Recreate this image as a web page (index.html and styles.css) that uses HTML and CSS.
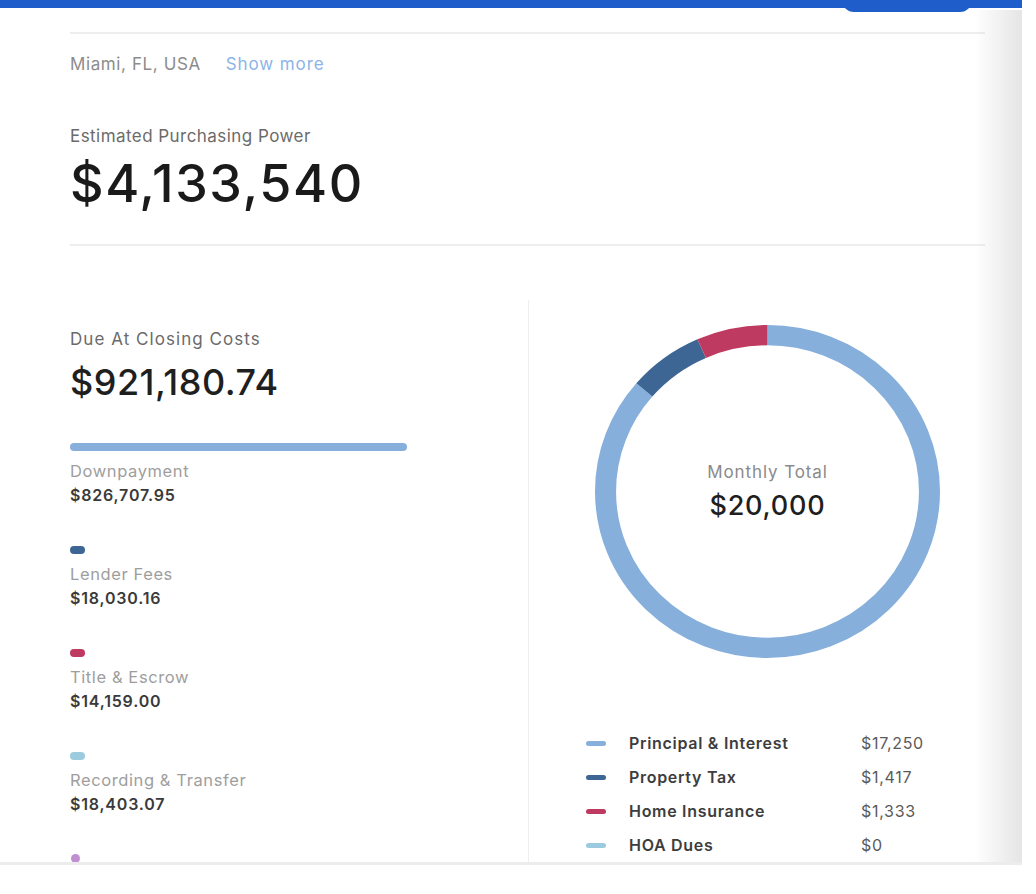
FILE: index.html
```html
<!DOCTYPE html>
<html lang="en">
<head>
<meta charset="utf-8">
<title>Purchasing Power</title>
<link rel="stylesheet" href="styles.css">
</head>
<body>
<div class="screen">
  <div class="topbar"><div class="tab"></div></div>
  <main class="content">
    <hr class="rule">
    <div class="location">
      <span class="city">Miami, FL, USA</span>
      <a class="more">Show more</a>
    </div>
    <section class="power">
      <div class="label label-power">Estimated Purchasing Power</div>
      <div class="power-value">$4,133,540</div>
    </section>
    <hr class="rule rule-lower">
    <div class="columns">
      <section class="closing">
        <div class="label label-closing">Due At Closing Costs</div>
        <div class="closing-value">$921,180.74</div>
        <ul class="costs">
          <li class="cost">
            <span class="marker marker-down" style="width:337px"></span>
            <span class="cost-label">Downpayment</span>
            <span class="cost-value">$826,707.95</span>
          </li>
          <li class="cost">
            <span class="marker marker-lender"></span>
            <span class="cost-label">Lender Fees</span>
            <span class="cost-value">$18,030.16</span>
          </li>
          <li class="cost">
            <span class="marker marker-title"></span>
            <span class="cost-label">Title &amp; Escrow</span>
            <span class="cost-value">$14,159.00</span>
          </li>
          <li class="cost">
            <span class="marker marker-record"></span>
            <span class="cost-label">Recording &amp; Transfer</span>
            <span class="cost-value">$18,403.07</span>
          </li>
          <li class="cost">
            <span class="marker marker-other"></span>
          </li>
        </ul>
      </section>
      <section class="monthly">
        <div class="donut">
          <svg class="ring" viewBox="0 0 344 344" preserveAspectRatio="none" aria-hidden="true">
            <g transform="rotate(-90 172 172)">
              <circle cx="172" cy="172" r="161.5" pathLength="100" fill="none" stroke="#86afdb" stroke-width="21" stroke-dasharray="86.25 100" stroke-dashoffset="0"/>
              <circle cx="172" cy="172" r="161.5" pathLength="100" fill="none" stroke="#3e6694" stroke-width="21" stroke-dasharray="7.085 100" stroke-dashoffset="-86.25"/>
              <circle cx="172" cy="172" r="161.5" pathLength="100" fill="none" stroke="#bf3a60" stroke-width="21" stroke-dasharray="6.665 100" stroke-dashoffset="-93.335"/>
            </g>
          </svg>
          <div class="donut-center">
            <div class="donut-label">Monthly Total</div>
            <div class="donut-value">$20,000</div>
          </div>
        </div>
        <ul class="legend">
          <li class="legend-row"><span class="dash dash-pi"></span><span class="legend-label">Principal &amp; Interest</span><span class="legend-value">$17,250</span></li>
          <li class="legend-row"><span class="dash dash-tax"></span><span class="legend-label">Property Tax</span><span class="legend-value">$1,417</span></li>
          <li class="legend-row"><span class="dash dash-ins"></span><span class="legend-label">Home Insurance</span><span class="legend-value">$1,333</span></li>
          <li class="legend-row"><span class="dash dash-hoa"></span><span class="legend-label">HOA Dues</span><span class="legend-value">$0</span></li>
        </ul>
      </section>
    </div>
  </main>
  <div class="shade"></div>
</div>
</body>
</html>
```

FILE: styles.css
```css
* { box-sizing: border-box; }

html, body {
  margin: 0;
  padding: 0;
  background: #ffffff;
}

body {
  font-family: Inter, "Liberation Sans", sans-serif;
  color: #222;
  width: 1036px;
  height: 894px;
  overflow: hidden;
}

.screen {
  position: relative;
  width: 1022px;
  height: 865px;
  border-bottom: 3px solid #ececec;
  overflow: hidden;
  background: #fff;
}

.topbar {
  height: 8px;
  background: #1f5dcb;
  display: flex;
  justify-content: flex-end;
  align-items: flex-start;
  padding-right: 50px;
  position: relative;
  z-index: 2;
}

.tab {
  width: 130px;
  height: 12px;
  background: #1f5dcb;
  border-radius: 0 0 14px 14px;
}

.content {
  padding: 24px 37px 0 70px;
}

.rule {
  margin: 0;
  border: 0;
  height: 2px;
  background: #eeeeee;
}

.location {
  margin-top: 20px;
  height: 20px;
  display: flex;
  align-items: center;
  gap: 25px;
  font-size: 17px;
  line-height: 20px;
}

.city {
  color: #8c8c8c;
  letter-spacing: 0.6px;
}

.more {
  color: #8db4e6;
  letter-spacing: 0.9px;
}

.power {
  margin-top: 52px;
}

.label {
  font-size: 17px;
  line-height: 20px;
  color: #6b6b6b;
}

.label-power { letter-spacing: 0.45px; }
.label-closing { letter-spacing: 1.05px; }

.power-value {
  margin-top: 10px;
  font-size: 52px;
  line-height: 56px;
  font-weight: 500;
  color: #1a1a1a;
  letter-spacing: 1.6px;
}

.rule-lower {
  margin-top: 32px;
}

.columns {
  margin-top: 54px;
  display: grid;
  grid-template-columns: 458px 1fr;
  height: 600px;
}

.closing {
  padding-top: 29px;
}

.closing-value {
  margin-top: 11px;
  font-size: 36px;
  line-height: 44px;
  font-weight: 500;
  color: #1f1f1f;
  letter-spacing: 0.5px;
}

.costs {
  list-style: none;
  margin: 39px 0 0;
  padding: 0;
  display: flex;
  flex-direction: column;
  gap: 41px;
}

.cost {
  display: flex;
  flex-direction: column;
  align-items: flex-start;
}

.marker {
  display: block;
  width: 15px;
  height: 8px;
  border-radius: 4px;
}

.marker-down { background: #86afdb; }
.marker-lender { background: #3e6694; }
.marker-title { background: #bf3a60; }
.marker-record { background: #9ccbe0; }
.marker-other {
  background: #c08fd2;
  width: 9px;
  height: 9px;
  border-radius: 50%;
  margin-left: 1px;
  margin-top: -1px;
}

.cost-label {
  margin-top: 10px;
  font-size: 16.5px;
  line-height: 20px;
  color: #9e9e9e;
  letter-spacing: 0.6px;
}

.cost-value {
  margin-top: 4px;
  font-size: 16px;
  line-height: 20px;
  font-weight: 600;
  color: #3a3a3a;
  letter-spacing: 0.8px;
}

.monthly {
  border-left: 1px solid #efefef;
  padding-top: 25px;
}

.donut {
  margin-left: 66px;
  width: 345px;
  height: 333px;
  display: grid;
}

.ring {
  grid-area: 1 / 1;
  width: 345px;
  height: 333px;
}

.donut-center {
  grid-area: 1 / 1;
  align-self: center;
  justify-self: center;
  text-align: center;
}

.donut-label {
  font-size: 17px;
  line-height: 24px;
  color: #8a8a8a;
  letter-spacing: 0.9px;
}

.donut-value {
  margin-top: 4px;
  font-size: 27px;
  line-height: 36px;
  font-weight: 500;
  color: #1f1f1f;
  letter-spacing: 0.8px;
}

.legend {
  list-style: none;
  margin: 68px 0 0 57px;
  padding: 0;
}

.legend-row {
  display: grid;
  grid-template-columns: 20px 209px auto;
  column-gap: 23px;
  align-items: center;
  height: 34px;
}

.dash {
  display: block;
  width: 20px;
  height: 5px;
  border-radius: 3px;
}

.dash-pi { background: #86afdb; }
.dash-tax { background: #3e6694; }
.dash-ins { background: #bf3a60; }
.dash-hoa { background: #9ccbe0; }

.legend-label {
  font-size: 16px;
  font-weight: 600;
  color: #3d3d3d;
  letter-spacing: 0.7px;
}

.legend-value {
  font-size: 16px;
  color: #5a5a5a;
  letter-spacing: 0.7px;
}

.shade {
  position: absolute;
  top: 10px;
  right: 0;
  bottom: 0;
  width: 48px;
  background: linear-gradient(to right, rgba(0, 0, 0, 0), rgba(0, 0, 0, 0.1));
  pointer-events: none;
}
```
